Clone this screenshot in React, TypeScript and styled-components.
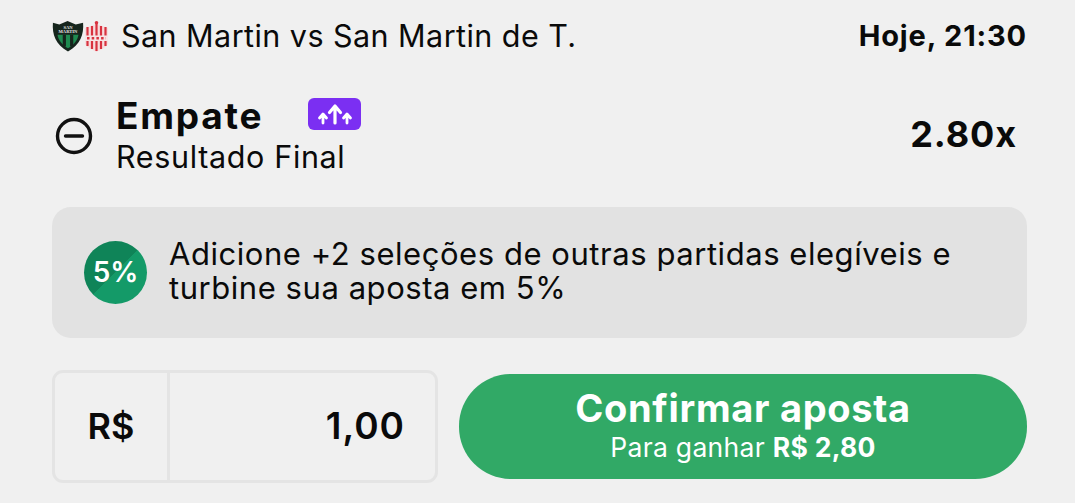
import React from 'react';
import styled, { createGlobalStyle } from 'styled-components';

const GlobalStyle = createGlobalStyle`
  html, body {
    margin: 0;
    padding: 0;
    background: #f0f0f0;
  }
  body {
    font-family: "Inter", "Liberation Sans", sans-serif;
    color: #0a0a0a;
  }
`;

const Page = styled.div`
  width: 1075px;
  height: 503px;
  box-sizing: border-box;
  padding: 16px 48px 0 52px;
  display: flex;
  flex-direction: column;
  overflow: hidden;
`;

const MatchRow = styled.div`
  display: flex;
  align-items: center;
  justify-content: space-between;
  height: 40px;
`;

const Teams = styled.div`
  display: flex;
  align-items: center;
`;

const Crests = styled.div`
  display: flex;
  align-items: center;
  width: 69px;
`;

const MatchName = styled.span`
  font-size: 30.5px;
  letter-spacing: 0.45px;
  padding-bottom: 2px;
`;

const MatchTime = styled.span`
  font-size: 29px;
  font-weight: 700;
  letter-spacing: 0.85px;
  padding-bottom: 2px;
`;

const SelectionRow = styled.div`
  display: flex;
  align-items: center;
  margin-top: 37px;
  height: 84px;
`;

const RemoveIcon = styled.svg`
  width: 38px;
  height: 38px;
  margin: 2px 23px 0 3px;
  flex: none;
`;

const SelectionInfo = styled.div`
  display: flex;
  flex-direction: column;
  flex: 1;
`;

const TitleLine = styled.div`
  display: flex;
  align-items: flex-start;
  height: 44px;
`;

const SelectionTitle = styled.span`
  font-size: 37px;
  font-weight: 700;
  line-height: 42px;
  letter-spacing: 1.8px;
`;

const BoostBadge = styled.div`
  width: 53px;
  height: 32px;
  margin: 3px 0 0 45px;
  border-radius: 6px;
  background: #7b2ff2;
  display: flex;
  align-items: center;
  justify-content: center;
`;

const Market = styled.span`
  font-size: 30.5px;
  line-height: 36px;
  letter-spacing: 0.65px;
`;

const Odds = styled.span`
  font-size: 36px;
  font-weight: 700;
  margin: 0 10px 2px 0;
  letter-spacing: 0.9px;
`;

const PromoBanner = styled.div`
  display: flex;
  align-items: center;
  height: 131px;
  margin-top: 30px;
  border-radius: 19px;
  background: #e2e2e2;
  padding-left: 32px;
  box-sizing: border-box;
`;

const PercentBadge = styled.div`
  width: 63px;
  height: 63px;
  border-radius: 50%;
  margin-right: 22px;
  flex: none;
  display: flex;
  align-items: center;
  justify-content: center;
  color: #fff;
  font-size: 28px;
  font-weight: 600;
  padding-bottom: 2px;
  box-sizing: border-box;
  background: linear-gradient(135deg, #0f8458 50%, #149a68 50%);
`;

const PromoText = styled.p`
  margin: 0 0 4px;
  font-size: 31px;
  line-height: 34px;
  letter-spacing: 0.55px;
`;

const BetRow = styled.div`
  display: flex;
  align-items: center;
  margin-top: 32px;
  gap: 21px;
`;

const StakeBox = styled.div`
  display: flex;
  width: 386px;
  height: 113px;
  box-sizing: border-box;
  border: 3px solid #e4e4e4;
  border-radius: 11px;
`;

const Currency = styled.div`
  width: 112px;
  border-right: 3px solid #e4e4e4;
  display: flex;
  align-items: center;
  justify-content: center;
  font-size: 36px;
  font-weight: 600;
  padding-bottom: 2px;
`;

const StakeValue = styled.div`
  flex: 1;
  display: flex;
  align-items: center;
  justify-content: flex-end;
  padding: 0 30px 2px 0;
  font-size: 37px;
  font-weight: 600;
  letter-spacing: 1px;
`;

const ConfirmButton = styled.button`
  flex: 1;
  height: 105px;
  border: none;
  border-radius: 52px;
  background: #31a966;
  color: #fff;
  font-family: inherit;
  display: flex;
  flex-direction: column;
  align-items: center;
  justify-content: center;
  padding: 0 0 6px;
`;

const ConfirmLabel = styled.span`
  font-size: 38px;
  font-weight: 700;
  line-height: 44px;
  letter-spacing: 0.7px;
  margin-bottom: 2px;
`;

const PayoutLine = styled.span`
  font-size: 26.5px;
  line-height: 30px;
  letter-spacing: 0.3px;
  b {
    font-weight: 700;
  }
`;

function HomeCrest() {
  return (
    <svg width="32" height="32" viewBox="0 0 35 35">
      <path d="M1 3 L8 5 L17 1 L26 5 L34 3 C35 16 31 27 17.500 34.500 C4 27 0 16 1 3 Z" fill="#16251d" />
      <path d="M6 16 H29 C28 22 24 27 17.500 31 C11 27 7 22 6 16 Z" fill="#1f8a50" />
      <path d="M13.500 16 V29 M21.500 16 V29" stroke="#16251d" strokeWidth="3.500" />
      <text x="17.500" y="9.500" fontSize="5" fontWeight="700" fill="#e8e8e8" textAnchor="middle" fontFamily="Liberation Serif, serif">SAN</text>
      <text x="17.500" y="14.500" fontSize="5" fontWeight="700" fill="#e8e8e8" textAnchor="middle" fontFamily="Liberation Serif, serif">MARTIN</text>
    </svg>
  );
}

function AwayCrest() {
  return (
    <svg width="25" height="31" viewBox="0 0 25 31">
      <path d="M1 7 L12.500 3 L24 7 V22 C24 26 17 28 12.500 31 C8 28 1 26 1 22 Z" fill="#f6dcdd" />
      <path d="M3.500 6 V25 M8 5 V28 M12.500 3 V30 M17 5 V28 M21.500 6 V25" stroke="#d8323f" strokeWidth="2.200" />
      <rect x="1" y="14.500" width="23" height="5.500" fill="#f6e4e5" />
      <path d="M3 17.200 H22" stroke="#d8323f" strokeWidth="2.400" strokeDasharray="2.500 2.200" />
      <circle cx="12.500" cy="1.800" r="1.800" fill="#d8323f" />
    </svg>
  );
}

function BoostArrows() {
  return (
    <svg width="36" height="22" viewBox="0 0 36 22" fill="none" stroke="#fff" strokeLinecap="round" strokeLinejoin="round">
      <path d="M18 20 V4 M12.500 9.500 L18 3 L23.500 9.500" strokeWidth="3.200" />
      <path d="M6 20 V12 M2.500 15 L6 11 L9.500 15" strokeWidth="2.800" />
      <path d="M30 20 V12 M26.500 15 L30 11 L33.500 15" strokeWidth="2.800" />
    </svg>
  );
}

export default function App() {
  return (
    <>
      <GlobalStyle />
      <Page>
        <MatchRow>
          <Teams>
            <Crests>
              <HomeCrest />
              <AwayCrest />
            </Crests>
            <MatchName>San Martin vs San Martin de T.</MatchName>
          </Teams>
          <MatchTime>Hoje, 21:30</MatchTime>
        </MatchRow>

        <SelectionRow>
          <RemoveIcon viewBox="0 0 38 38" fill="none" stroke="#111" strokeWidth="3.400" strokeLinecap="round">
            <circle cx="19" cy="19" r="16.500" />
            <path d="M10.500 19 H27.500" />
          </RemoveIcon>
          <SelectionInfo>
            <TitleLine>
              <SelectionTitle>Empate</SelectionTitle>
              <BoostBadge>
                <BoostArrows />
              </BoostBadge>
            </TitleLine>
            <Market>Resultado Final</Market>
          </SelectionInfo>
          <Odds>2.80x</Odds>
        </SelectionRow>

        <PromoBanner>
          <PercentBadge>5%</PercentBadge>
          <PromoText>
            Adicione +2 seleções de outras partidas elegíveis e
            <br />
            turbine sua aposta em 5%
          </PromoText>
        </PromoBanner>

        <BetRow>
          <StakeBox>
            <Currency>R$</Currency>
            <StakeValue>1,00</StakeValue>
          </StakeBox>
          <ConfirmButton>
            <ConfirmLabel>Confirmar aposta</ConfirmLabel>
            <PayoutLine>
              Para ganhar <b>R$ 2,80</b>
            </PayoutLine>
          </ConfirmButton>
        </BetRow>
      </Page>
    </>
  );
}
